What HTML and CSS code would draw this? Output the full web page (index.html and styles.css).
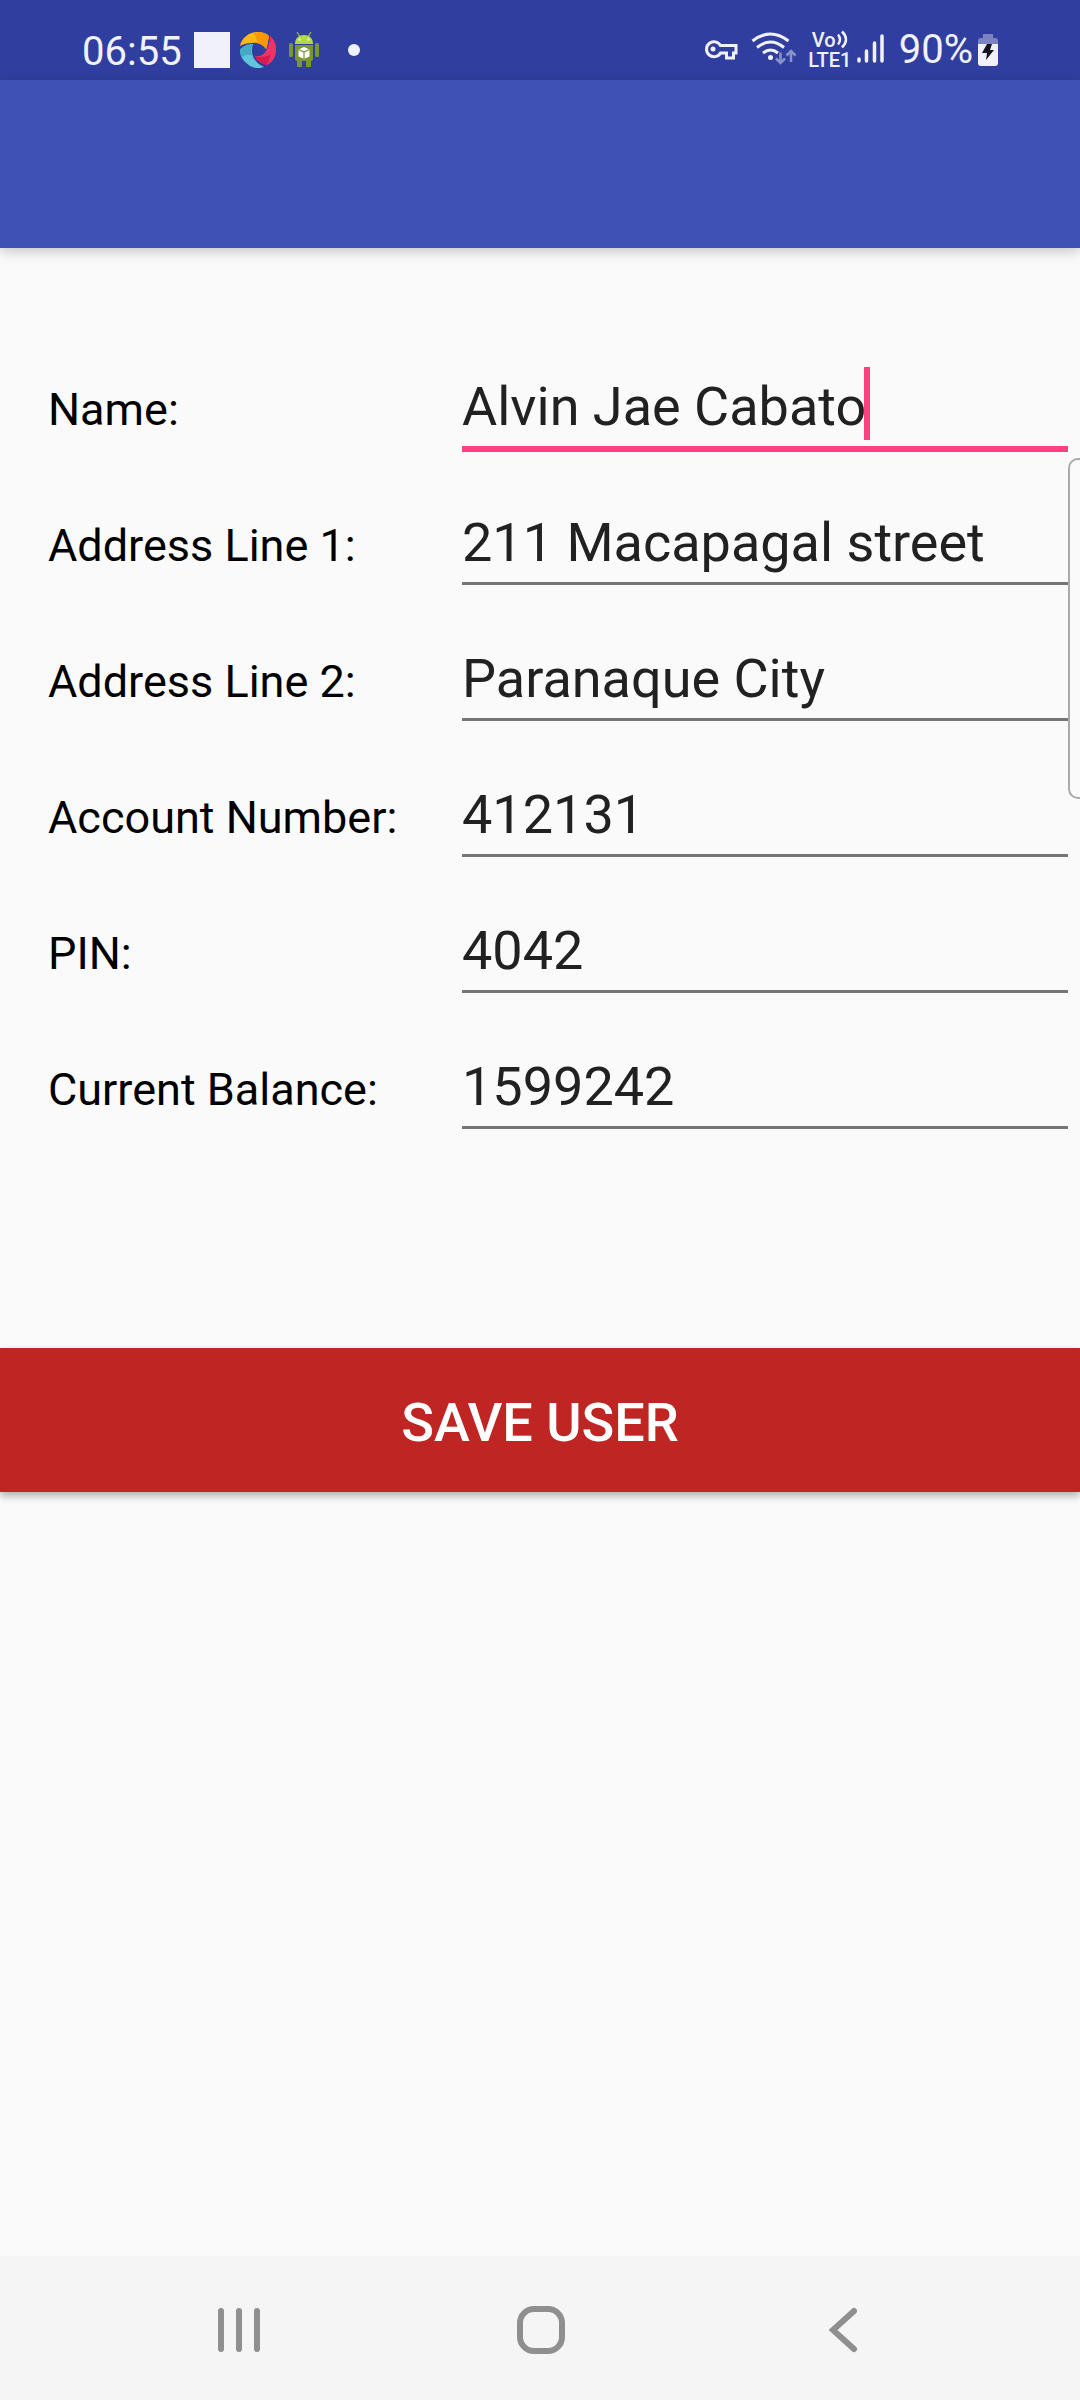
FILE: index.html
```html
<!DOCTYPE html>
<html lang="en">
<head>
<meta charset="utf-8">
<meta name="viewport" content="width=device-width">
<title>Edit user</title>
<link rel="stylesheet" href="styles.css">
</head>
<body>
<div class="status-bar">
  <div class="status-left">
    <span class="status-text clock">06:55</span>
    <span class="notice-square"></span>
    <svg class="notice-swirl" viewBox="0 0 36 36" width="36" height="36" aria-hidden="true">
      <path fill="#fdb813" d="M0 14C2 5 10 0 18 0c5 0 9 2 11 4-1 4-1 8-3 13C23 12 17 10 12 11 7 11 3 12 0 14z"/>
      <path fill="#ff9800" d="M14 1c6-2 12 0 15 3-1 4-1 8-3 13-2-3-5-5-8-6z"/>
      <path fill="#ef3368" d="M30 4c5 4 7 10 6 16-1 7-5 11-9 13-5-1-10-4-12-9 6 1 10-2 12-7 2-4 3-9 3-13z"/>
      <path fill="#d51d4d" d="M15 24c5 2 12 1 16-2l-4 11c-5-1-10-4-12-9z"/>
      <path fill="#61c3dc" d="M0 18c3-4 8-6 13-6-2 6-1 12 2 16 2 3 5 5 9 7-7 3-14 0-19-5-4-4-5-8-5-12z"/>
      <path fill="#43a9c6" d="M0 18c3-4 8-6 13-6-2 4-2 8-1 11-4-1-9 0-10 3-1-3-2-5-2-8z"/>
    </svg>
    <svg class="notice-robot" viewBox="0 0 30 36" width="30" height="36" aria-hidden="true">
      <path d="M8 0l3 5M22 0l-3 5" stroke="#8faf38" stroke-width="1.4"/>
      <path d="M6 12C6 6 10 3 15 3s9 3 9 9z" fill="#b0d94a"/>
      <path d="M6 13h18v14q0 2-2 2H8q-2 0-2-2z" fill="#78972e"/>
      <rect x="0" y="11" width="4" height="14" rx="1.5" fill="#78972e"/>
      <rect x="26" y="11" width="4" height="14" rx="1.5" fill="#78972e"/>
      <path d="M8 29h5v6H9q-1 0-1-1zM17 29h5v5q0 1-1 1h-4z" fill="#78972e"/>
      <circle cx="10.500" cy="7.500" r="1" fill="#fff"/><circle cx="19.500" cy="7.500" r="1" fill="#fff"/>
      <path d="M15 15l5.500 2.500v7L15 27l-5.500-2.500v-7z" fill="#fff"/>
      <path d="M9.500 17.500L15 20l5.500-2.500M15 20v7" fill="none" stroke="#78972e" stroke-width="1.200"/>
    </svg>
    <span class="notice-dot"></span>
  </div>
  <div class="status-right">
    <svg viewBox="0 0 94 36" width="94" height="36" aria-hidden="true">
      <!-- VPN key -->
      <path fill="none" stroke="#f1f1fb" stroke-width="3" d="M17.500 13.500H33v7.500h-2.500v5h-7v-5h-6A7.500 7.500 0 1 1 17.500 13.500z"/>
      <circle cx="10" cy="17" r="2.500" fill="#f1f1fb"/>
      <!-- Wi-Fi with traffic arrows -->
      <path fill="none" stroke="#f1f1fb" stroke-width="3" d="M49.500 9q18-14 36 0M54 15.500q13.500-11 27 0M60 21q7.500-6 15 0"/>
      <circle cx="67.500" cy="25.500" r="2.500" fill="#f1f1fb"/>
      <path fill="none" stroke="#8b92cb" stroke-width="2.500" d="M77.500 20.500V31M73 26.500l4.500 4.500 4.500-4.500M88 30V19M83.500 23.500l4.500-4.500 4.500 4.500"/>
    </svg>
    <div class="volte">
      <span class="volte-line">Vo<svg viewBox="0 0 12 18" width="12" height="18" aria-hidden="true"><path fill="none" stroke="#f1f1fb" stroke-width="2.500" d="M2 4.500q4 5 0 10M6 1.500q8 8 0 16"/></svg></span>
      <span>LTE1</span>
    </div>
    <svg class="signal" viewBox="0 0 28 36" width="28" height="36" aria-hidden="true">
      <path stroke="#f1f1fb" stroke-width="3.500" stroke-linecap="round" d="M2 27v2M9.500 19v10M17.500 11v18M25 4v25"/>
    </svg>
    <span class="status-text">90%</span>
    <svg class="battery" viewBox="0 0 20 32" width="20" height="32" aria-hidden="true">
      <path fill="#7c83c3" d="M5 0h10v4h2q3 0 3 3v3H0V7q0-3 3-3h2z"/>
      <path fill="#f1f1fb" d="M0 10h20v19q0 3-3 3H3q-3 0-3-3z"/>
      <path fill="#14141c" d="M9 10h5l-2 6h4L8 26l1-7H4z"/>
    </svg>
  </div>
</div>
<header class="app-bar"></header>
<main class="content">
  <form class="user-form">
    <div class="fields">
      <div class="row">
        <label for="name">Name:</label>
        <div class="field active">
          <input id="name" type="text" value="Alvin Jae Cabato">
          <span class="caret"></span>
        </div>
      </div>
      <div class="row">
        <label for="address1">Address Line 1:</label>
        <div class="field"><input id="address1" type="text" value="211 Macapagal street"></div>
      </div>
      <div class="row">
        <label for="address2">Address Line 2:</label>
        <div class="field"><input id="address2" type="text" value="Paranaque City"></div>
      </div>
      <div class="row">
        <label for="account">Account Number:</label>
        <div class="field"><input id="account" type="text" inputmode="numeric" value="412131"></div>
      </div>
      <div class="row">
        <label for="pin">PIN:</label>
        <div class="field"><input id="pin" type="text" inputmode="numeric" value="4042"></div>
      </div>
      <div class="row">
        <label for="balance">Current Balance:</label>
        <div class="field"><input id="balance" type="text" inputmode="numeric" value="1599242"></div>
      </div>
    </div>
    <button class="save" type="button">SAVE USER</button>
  </form>
</main>
<nav class="nav-bar">
  <button type="button" aria-label="Recent apps">
    <svg viewBox="0 0 48 48" width="48" height="48"><path d="M6 5v38M24 5v38M42 5v38"/></svg>
  </button>
  <button type="button" aria-label="Home">
    <svg viewBox="0 0 48 48" width="48" height="48"><rect x="3" y="3" width="42" height="42" rx="14"/></svg>
  </button>
  <button type="button" aria-label="Back">
    <svg viewBox="0 0 48 48" width="48" height="48"><path d="M35 5L14 24l21 19"/></svg>
  </button>
</nav>
<div class="edge-handle"></div>
</body>
</html>
```

FILE: styles.css
```css
* {
  box-sizing: border-box;
}

body {
  margin: 0;
  min-height: 100vh;
  display: flex;
  flex-direction: column;
  position: relative;
  overflow-x: hidden;
  background: #fafafa;
  font-family: Roboto, "Noto Sans", sans-serif;
  color: #000;
}

.status-bar {
  display: flex;
  justify-content: space-between;
  height: 80px;
  padding: 20px 82px 0 82px;
  background: #303f9f;
}

.status-left,
.status-right {
  display: flex;
  align-items: center;
  height: 60px;
}

.status-text {
  font-size: 40px;
  line-height: 48px;
  color: #f1f1fb;
}

.clock {
  width: 112px;
  padding-top: 4px;
}

.notice-square {
  width: 36px;
  height: 36px;
  background: #f1f1fb;
}

.notice-swirl {
  margin-left: 10px;
}

.notice-robot {
  margin-left: 13px;
}

.notice-dot {
  width: 12px;
  height: 12px;
  margin-left: 29px;
  border-radius: 50%;
  background: #f1f1fb;
}

.volte {
  display: flex;
  flex-direction: column;
  align-items: center;
  width: 42px;
  margin: 0 6px 0 12px;
  font-size: 20px;
  font-weight: 500;
  line-height: 20px;
  color: #f1f1fb;
}

.volte-line {
  display: flex;
}

.signal {
  margin-right: 14px;
}

.battery {
  margin-left: 5px;
}

.app-bar {
  height: 168px;
  background: #3f51b5;
  box-shadow: 0 4px 12px rgba(0, 0, 0, 0.2);
}

.content {
  flex: 1;
}

.user-form {
  padding-top: 119px;
}

.fields {
  display: flex;
  flex-direction: column;
  gap: 54px;
  padding: 0 12px 0 48px;
}

.row {
  display: grid;
  grid-template-columns: 414px 1fr;
  align-items: baseline;
  height: 82px;
}

.row label {
  font-size: 45px;
  line-height: 54px;
}

.field {
  position: relative;
}

.field input {
  display: block;
  width: 100%;
  height: 82px;
  margin: 0;
  padding: 7px 0 8px;
  border: 0;
  border-bottom: 3px solid #757575;
  border-radius: 0;
  outline: 0;
  background: transparent;
  font: 54px/64px Roboto, "Noto Sans", sans-serif;
  color: #212121;
}

.active input {
  height: 85px;
  border-bottom: 6px solid #ff4081;
}

.caret {
  position: absolute;
  left: 402px;
  top: 0;
  width: 6px;
  height: 73px;
  background: #ff4081;
}

.save {
  display: block;
  width: 100%;
  margin: 219px 0 0;
  padding: 43px 0 37px;
  border: 0;
  background: #bf2522;
  box-shadow: 0 4px 8px rgba(0, 0, 0, 0.3);
  font: 500 54px/64px Roboto, "Noto Sans", sans-serif;
  color: #fff;
}

.nav-bar {
  display: flex;
  justify-content: space-between;
  align-items: center;
  height: 144px;
  padding: 4px 183px 0 185px;
  background: #f5f5f5;
}

.nav-bar button {
  padding: 20px 30px;
  border: 0;
  background: none;
}

.nav-bar svg {
  display: block;
  fill: none;
  stroke: #8f8f8f;
  stroke-width: 6px;
  stroke-linecap: round;
}

.edge-handle {
  position: absolute;
  right: 0;
  top: 458px;
  width: 12px;
  height: 341px;
  border: 2px solid #aaa;
  border-right: 0;
  border-radius: 10px 0 0 10px;
  background: #fafafa;
}
```
